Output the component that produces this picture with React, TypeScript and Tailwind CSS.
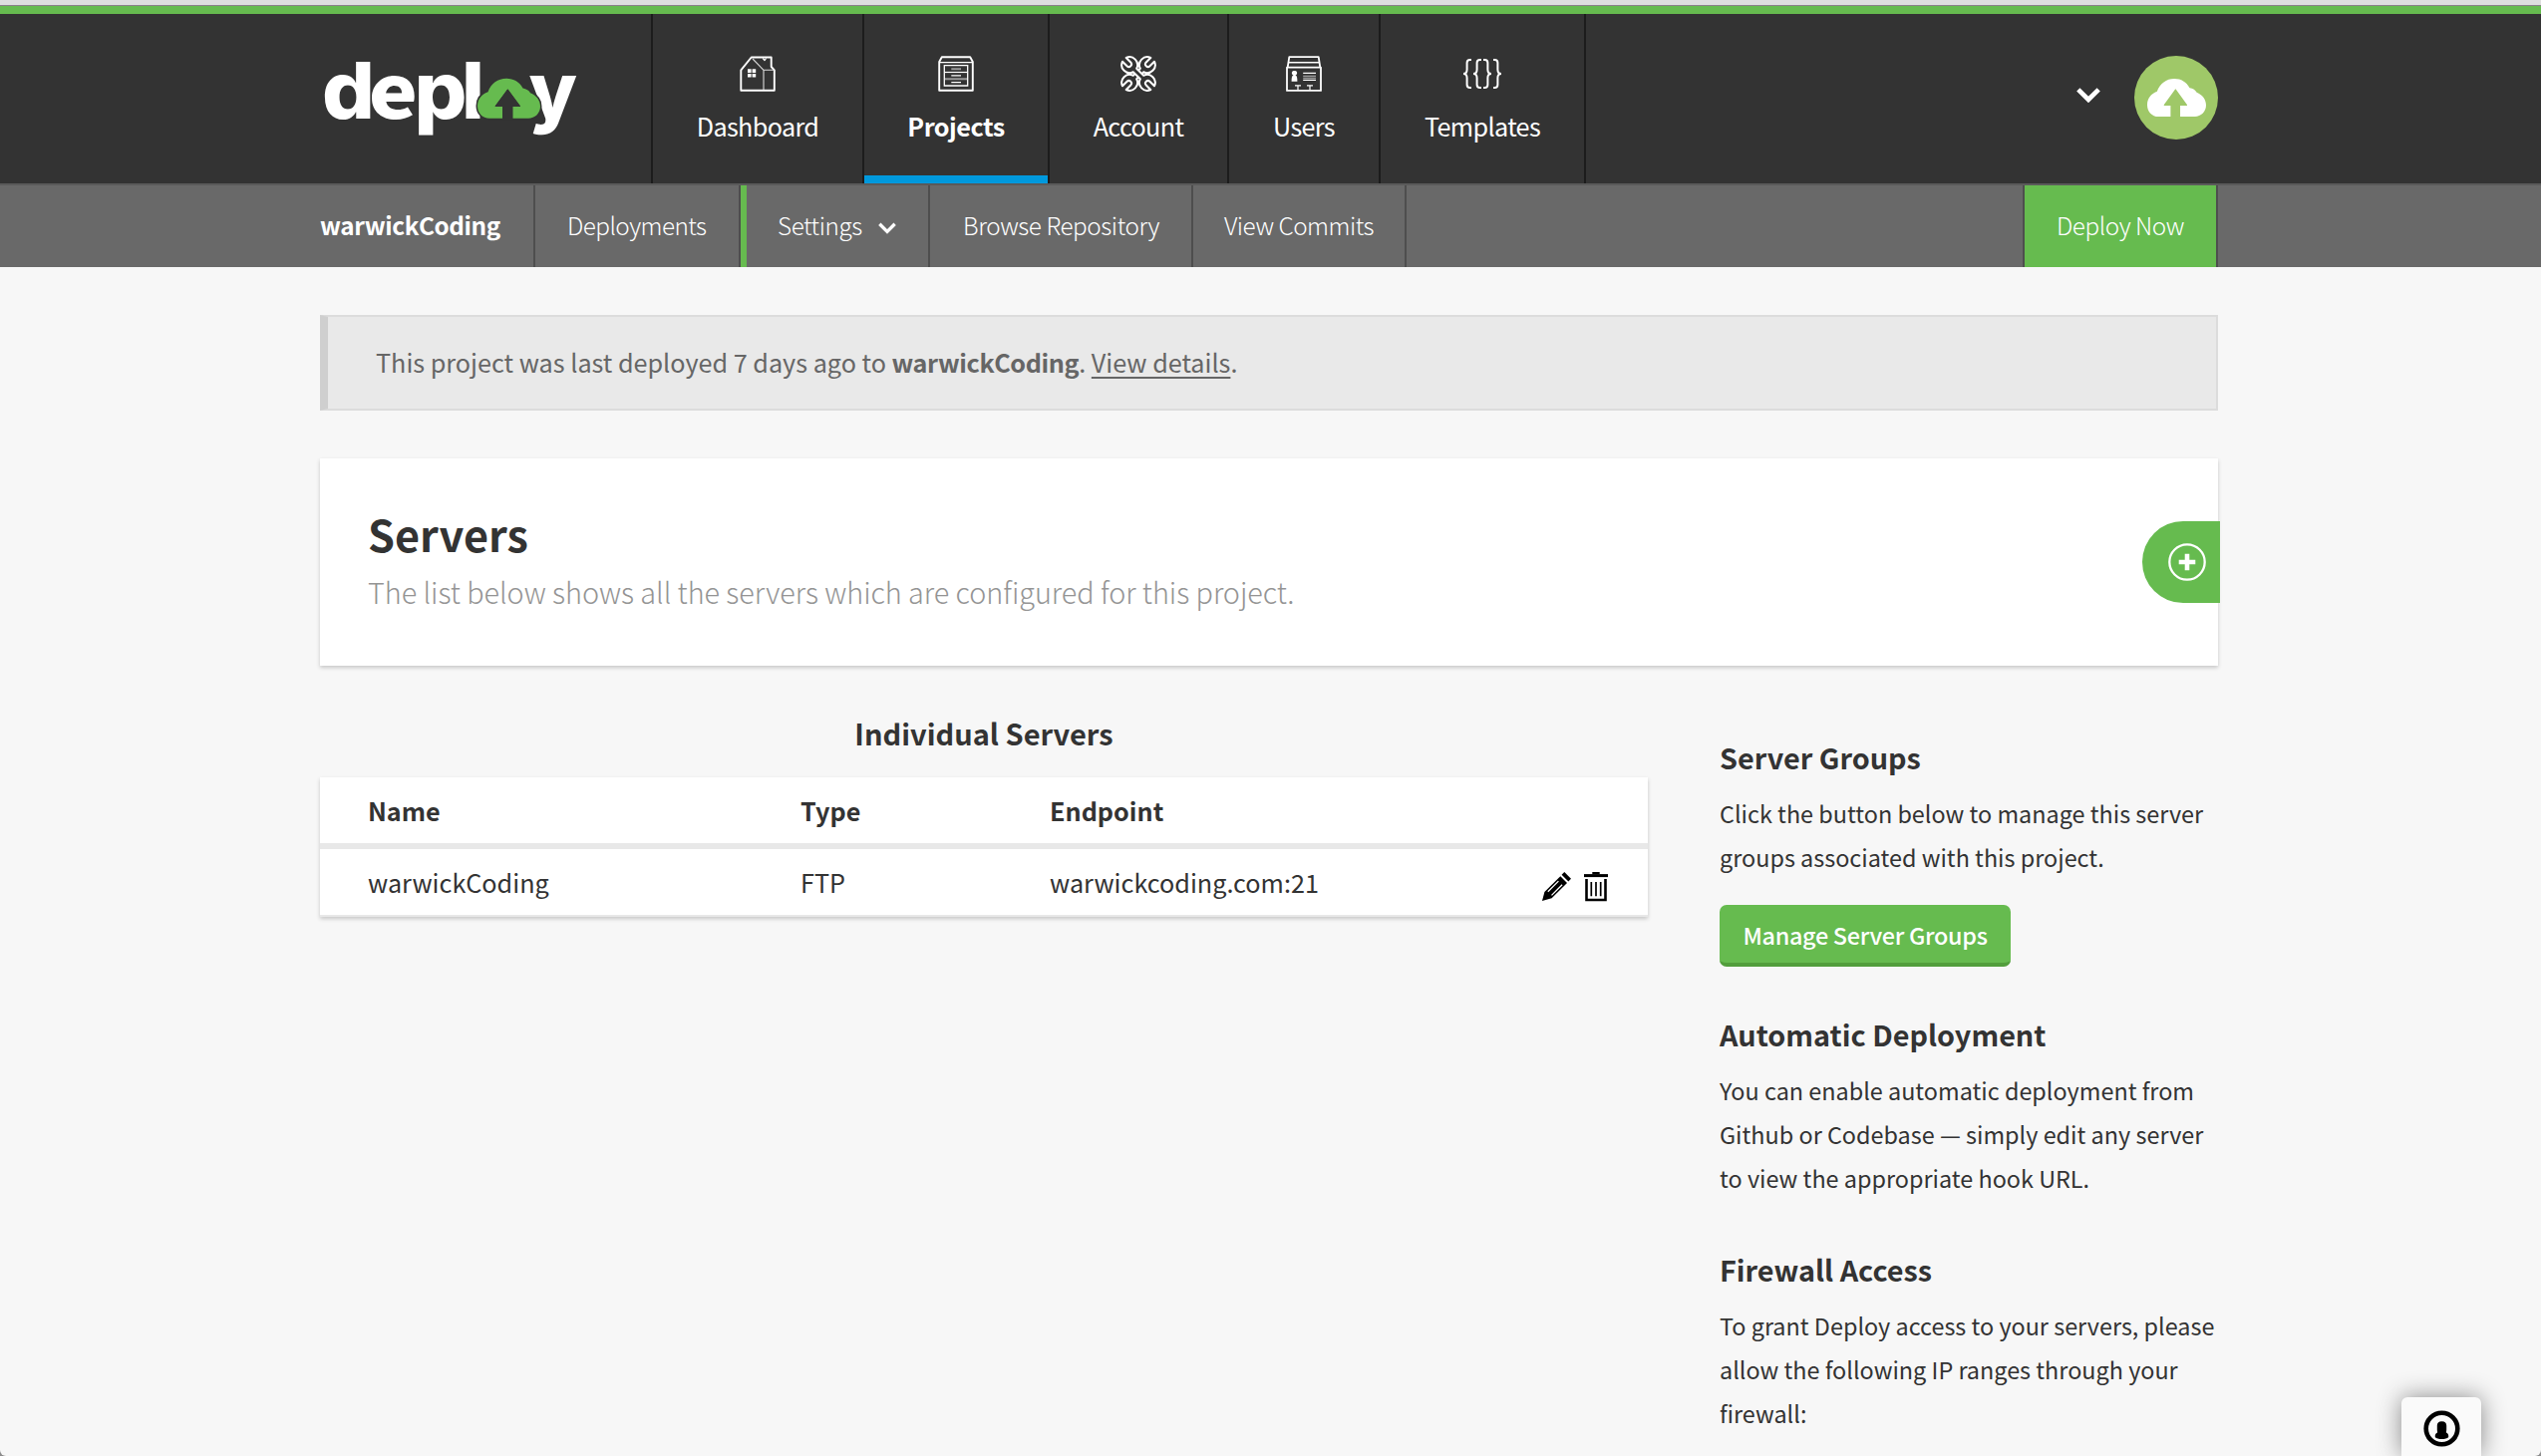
import type { ReactNode } from "react";

const cloudPath =
  "M12 40C5 40 0 34.5 0 27.5C0 21 4 15.8 10.5 13.5C13.5 5 20.5 0 29 0C36.5 0 42 3.5 45.5 9.8C49 10.4 51.8 12 53 14.6C59 17 63 22 63 28C63 35 57.5 40 51 40H35.3V28.3H42.3Q43.2 28.3 42.6 27.4L30.8 11.2Q30.3 10.5 29.8 11.2L18 27.4Q17.4 28.3 18.3 28.3H25V40Z";

function Logo() {
  return (
    <svg width="256" height="84" viewBox="0 0 256 84" className="block overflow-visible" role="img" aria-label="deploy">
      <g fill="#fff" fontFamily="Inter, sans-serif" fontWeight="800" fontSize="79">
        <text x="-1" y="62" textLength="53" lengthAdjust="spacingAndGlyphs">d</text>
        <text x="45.7" y="62" textLength="49.4" lengthAdjust="spacingAndGlyphs" fontFamily="'Noto Sans CJK SC', sans-serif" fontWeight="900" fontSize="73">e</text>
        <text x="91.5" y="62" textLength="53" lengthAdjust="spacingAndGlyphs">p</text>
        <text x="139" y="62" textLength="23" lengthAdjust="spacingAndGlyphs">l</text>
        <text x="206.5" y="62" textLength="48.5" lengthAdjust="spacingAndGlyphs">y</text>
      </g>
      <g transform="translate(155 21.7)">
        <path d={cloudPath} fill="#66bb4f" stroke="#333" strokeWidth="3" paintOrder="stroke" />
        <path d="M25 42V28.3H18.3Q17.4 28.3 18 27.4L29.8 11.2Q30.3 10.5 30.8 11.2L42.6 27.4Q43.2 28.3 42.3 28.3H35.3V42Z" fill="#333" />
      </g>
    </svg>
  );
}

function HouseIcon() {
  return (
    <svg width="36" height="36" viewBox="0 0 36 36" fill="none" stroke="#fff" strokeWidth="1.9" strokeLinejoin="round">
      <path d="M1.3 34.8V14.3L11.7 1.5H31.7V11L34.8 14.3V34.8Z" />
      <path d="M13 3L24 14.3H34.5M24 14.3V34" strokeWidth="1.1" stroke="#ddd" />
      <path d="M23.2 2.5L25 4.6L26.6 2.5" strokeWidth="1.2" />
      <path d="M8 13.3h3.6v3.6H8zM12.6 13.3h3.6v3.6h-3.6zM8 18h3.6v3.6H8zM12.6 18h3.6v3.6h-3.6z" fill="#fff" stroke="none" />
    </svg>
  );
}

function CabinetIcon() {
  return (
    <svg width="36" height="36" viewBox="0 0 36 36" fill="none" stroke="#fff" strokeWidth="1.9" strokeLinejoin="round">
      <path d="M1.2 34.8V6L3.8 1.3H32.2L34.8 6V34.8Z" />
      <path d="M1.2 6.6H34.8" strokeWidth="1.4" />
      <path d="M6.3 9.7H29.7V30H6.3Z" strokeWidth="1.3" strokeLinejoin="miter" />
      <path d="M6.3 16.5H29.7" strokeWidth="1.2" />
      <path d="M7 23.3H29M13.3 13.2H23" strokeWidth="2" stroke="#999" />
      <path d="M13.3 19.8H23M13.3 26.7H23" strokeWidth="1.3" />
    </svg>
  );
}

function WrenchesIcon() {
  const d =
    "M-2.6 -20V-13.6A2.6 2.6 0 0 0 2.6 -13.6V-20A7.9 7.9 0 0 1 2.4 -5V5A7.9 7.9 0 0 1 2.6 20V13.6A2.6 2.6 0 0 0 -2.6 13.6V20A7.9 7.9 0 0 1 -2.4 5V-5A7.9 7.9 0 0 1 -2.6 -20Z";
  return (
    <svg width="36" height="36" viewBox="-18 -18 36 36" fill="#333" stroke="#fff" strokeWidth="2" strokeLinejoin="round">
      <path d={d} transform="rotate(45)" />
      <path d={d} transform="rotate(-45)" />
    </svg>
  );
}

function CardIcon() {
  return (
    <svg width="36" height="36" viewBox="0 0 36 36" fill="none" stroke="#fff" strokeWidth="1.8" strokeLinejoin="round">
      <path d="M1.7 11.5L3.3 1.2H32.7L34.3 11.5" />
      <path d="M2.8 6.7H33.2" strokeWidth="1.5" />
      <path d="M1 11.7H35V34.9H1Z" />
      <path d="M8.5 15a2.2 2.2 0 0 1 1 4.3C11 20 11.4 22 11.4 25.8H5.6C5.6 22 6 20 7.5 19.3A2.2 2.2 0 0 1 8.5 15Z" fill="#fff" stroke="none" />
      <path d="M17.2 17.4H30M17.2 24.4H30" strokeWidth="1.1" />
      <path d="M17.2 20.2H30M17.2 22.3H30" strokeWidth="1.1" stroke="#bbb" />
      <path d="M9 29.8H15M12 29.8V35M21 29.8H27M24 29.8V35" strokeWidth="1.2" />
    </svg>
  );
}

function BracesIcon() {
  const brace = "M9 1H7.6Q4.6 1 4.6 4V10.8Q4.6 15 1 15Q4.6 15 4.6 19.2V26Q4.6 29 7.6 29H9";
  return (
    <svg width="40" height="36" viewBox="0 -3 40 36" fill="none" stroke="#fff" strokeWidth="2">
      <path d={brace} />
      <path d={brace} transform="translate(10 0)" />
      <path d={brace} transform="translate(30 0) scale(-1 1)" />
      <path d={brace} transform="translate(40 0) scale(-1 1)" />
    </svg>
  );
}

function Chevron({ w, h, stroke }: { w: number; h: number; stroke: number }) {
  return (
    <svg width={w} height={h} viewBox="0 0 24 15" fill="none" stroke="#fff" strokeWidth={stroke}>
      <path d="M1.8 1.8L12 12L22.2 1.8" />
    </svg>
  );
}

function NavItem({ icon, label, width, active }: { icon: ReactNode; label: string; width: string; active?: boolean }) {
  return (
    <a className={`flex h-full flex-col items-center border-l-2 border-[#1c1c1c] pt-[42px] ${width}`}>
      <span className="flex h-9 items-center">{icon}</span>
      <span className={`mt-[18px] text-[25.2px] leading-8 ${active ? "font-bold tracking-[-0.5px]" : "font-normal tracking-[-0.65px]"}`}>{label}</span>
      {active && <span className="mt-auto h-2 w-full bg-[#0099dd]" />}
    </a>
  );
}

function SubItem({ children, className }: { children: ReactNode; className: string }) {
  return (
    <a className={`flex h-full items-center border-l-2 border-[#4e4e4e] pb-[2px] ${className}`}>{children}</a>
  );
}

export default function App() {
  return (
    <div className="h-[1461px] w-[2549px] overflow-hidden bg-[#8c8c8c]">
      <div className="relative h-full overflow-hidden rounded-b-[6px] bg-[#f7f7f7] font-['Noto_Sans_CJK_SC','Noto_Sans',sans-serif] text-[#333]">
        <div className="h-[5px] bg-[#dedede]" />
        <div className="h-px bg-[#8a8088]" />
        <header className="h-[180px] border-t-8 border-b-2 border-t-[#66bb4f] border-b-[#5a5a5a] bg-[#333] text-white">
          <div className="ml-[321px] flex h-full w-[1904px]">
            <div className="w-[332px] shrink-0 pt-[43px]">
              <div className="ml-[3px]">
                <Logo />
              </div>
            </div>
            <nav className="flex h-full border-r-2 border-[#1c1c1c]">
              <NavItem icon={<HouseIcon />} label="Dashboard" width="w-[212px]" />
              <NavItem icon={<CabinetIcon />} label="Projects" width="w-[186px]" active />
              <NavItem icon={<WrenchesIcon />} label="Account" width="w-[180px]" />
              <NavItem icon={<CardIcon />} label="Users" width="w-[152px]" />
              <NavItem icon={<BracesIcon />} label="Templates" width="w-[206px]" />
            </nav>
            <div className="mt-[42px] ml-auto flex h-[84px] items-center gap-[34px]">
              <span className="pb-[5px]">
                <Chevron w={24} h={15} stroke={4.6} />
              </span>
              <span className="flex size-[84px] shrink-0 items-center justify-center rounded-full bg-[#9fc868]">
                <svg width="59" height="38" viewBox="0 0 63 40" preserveAspectRatio="none">
                  <path d={cloudPath} fill="#fff" />
                </svg>
              </span>
            </div>
          </div>
        </header>

        <div className="h-[82px] bg-[#696969] text-white">
          <div className="ml-[321px] flex h-full w-[1904px] text-[24.3px] leading-8 font-light tracking-[-0.45px]">
            <a className="flex h-full w-[214px] items-center pb-[2px] font-bold tracking-[-0.4px]">warwickCoding</a>
            <SubItem className="w-[206px] pl-8 tracking-[-0.55px]">Deployments</SubItem>
            <div className="flex h-full w-[190px] border-l-2 border-[#4e4e4e]">
              <div className="w-1.5 bg-[#66bb4f]" />
              <a className="flex h-full items-center gap-4 pb-[2px] pl-[31px]">
                Settings
                <span className="pt-[5px]">
                  <Chevron w={18} h={12} stroke={4.4} />
                </span>
              </a>
            </div>
            <SubItem className="w-[264px] pl-[33px]">Browse Repository</SubItem>
            <SubItem className="w-[214px] pl-[31px] tracking-[-0.5px]">View Commits</SubItem>
            <div className="h-full w-0.5 bg-[#4e4e4e]" />
            <a className="ml-auto flex h-full w-[196px] items-center justify-center border-x-2 border-[#4e4e4e] bg-[#66bb4f] pb-[2px]">
              Deploy Now
            </a>
          </div>
        </div>

        <main className="ml-[321px] w-[1904px] pt-12">
          <div className="flex h-24 items-center border-2 border-l-8 border-[#dcdcdc] border-l-[#cfcfcf] bg-[#e9e9e9] pl-12 text-[25.2px] text-[#666]">
            <p>
              This project was last deployed 7 days ago to <b className="font-bold tracking-[-0.4px]">warwickCoding</b>.{" "}
              <a className="underline decoration-2 underline-offset-4">View details</a>.
            </p>
          </div>

          <section className="relative mt-12 h-[208px] bg-white px-12 pt-[47px] shadow-[0_2px_4px_rgba(0,0,0,0.2)]">
            <h1 className="text-[43.2px] leading-[56px] font-bold">Servers</h1>
            <p className="mt-[11px] text-[28.8px] leading-10 font-light tracking-[-0.04px] text-[#949494]">
              The list below shows all the servers which are configured for this project.
            </p>
            <button className="absolute top-[63px] -right-0.5 flex h-[82px] w-[78px] items-center justify-center rounded-l-[41px] bg-[#66bb4f] pl-3">
              <svg width="38" height="38" viewBox="0 0 38 38" fill="none" stroke="#fff">
                <circle cx="19" cy="19" r="17.7" strokeWidth="2.3" />
                <path d="M10.7 19H27.3M19 10.7V27.3" strokeWidth="4.6" />
              </svg>
            </button>
          </section>

          <div className="flex">
            <section className="w-[1332px] pt-[45px]">
              <h2 className="text-center text-[29px] leading-[44px] font-bold">Individual Servers</h2>
              <div className="mt-[23px] border-b-2 border-[#e8e8e8] bg-white text-[25.2px] shadow-[0_2px_4px_rgba(0,0,0,0.2)]">
                <div className="grid h-[72px] grid-cols-[434px_250px_1fr] items-center border-b-6 border-[#e8e8e8] pt-[2px] pl-12 font-bold">
                  <span>Name</span>
                  <span>Type</span>
                  <span>Endpoint</span>
                </div>
                <div className="grid h-[66px] grid-cols-[434px_250px_1fr_auto] items-center pt-[2px] pr-10 pl-12">
                  <span>warwickCoding</span>
                  <span>FTP</span>
                  <span>warwickcoding.com:21</span>
                  <span className="flex gap-[13px] pt-[8px]">
                    <svg width="29" height="29" viewBox="0 0 29 29" fill="#000">
                      <path d="M22.3 0L29 6.7L26.3 9.4L19.6 2.7Z" />
                      <path d="M18.3 4.2L25 10.9L9.6 26.3L0 29L2.4 19.9Z" />
                      <path d="M16.4 9.1L5.8 19.7M20.1 12.8L9.5 23.4" stroke="#fff" strokeWidth="1.3" />
                    </svg>
                    <svg width="24" height="30" viewBox="0 0 24 30" fill="none" stroke="#000">
                      <path d="M8.3 1.2H15.7" strokeWidth="2.4" />
                      <path d="M0 3.6H24" strokeWidth="3" />
                      <path d="M2.5 7V28H21.5V7" strokeWidth="2.6" />
                      <path d="M7.3 10V24.3M12 10V24.3M16.7 10V24.3" strokeWidth="1.7" />
                    </svg>
                  </span>
                </div>
              </div>
            </section>

            <aside className="ml-[72px] w-[500px] pt-[70px] text-[23.4px] leading-[44px] whitespace-nowrap">
              <h3 className="mb-[12px] text-[28.8px] font-bold">Server Groups</h3>
              <p>
                Click the button below to manage this server
                <br />
                groups associated with this project.
              </p>
              <button className="mt-[26px] flex h-[62px] w-[292px] items-center justify-center rounded-[7px] border-b-4 border-[#529e3c] bg-[#66bb4f] pt-[2px] font-medium tracking-[-0.3px] text-white">
                Manage Server Groups
              </button>
              <h3 className="mt-[46px] mb-[12px] text-[28.8px] font-bold">Automatic Deployment</h3>
              <p>
                You can enable automatic deployment from
                <br />
                Github or Codebase — simply edit any server
                <br />
                to view the appropriate hook URL.
              </p>
              <h3 className="mt-[48px] mb-[12px] text-[28.8px] font-bold">Firewall Access</h3>
              <p>
                To grant Deploy access to your servers, please
                <br />
                allow the following IP ranges through your
                <br />
                firewall:
              </p>
            </aside>
          </div>
        </main>

        <button className="absolute right-[60px] bottom-0 flex h-[59px] w-20 justify-center rounded-t-[6px] bg-[#fafafa] pt-[13px] shadow-[0_0_24px_rgba(0,0,0,0.45)]">
          <svg width="37" height="37" viewBox="0 0 37 37">
            <circle cx="18.5" cy="18.5" r="15.8" fill="none" stroke="#000" strokeWidth="4.6" />
            <path d="M18.5 11.2C21.8 11.2 23.2 13 23.2 15.5V19.5C23.2 21.5 22.6 22 23 22.6C24.8 23.2 25.4 25 25.2 27C23 29.8 14 29.8 11.8 27C11.6 25 12.2 23.2 14 22.6C14.4 22 13.8 21.5 13.8 19.5V15.5C13.8 13 15.2 11.2 18.5 11.2Z" fill="#000" />
          </svg>
        </button>
      </div>
    </div>
  );
}
